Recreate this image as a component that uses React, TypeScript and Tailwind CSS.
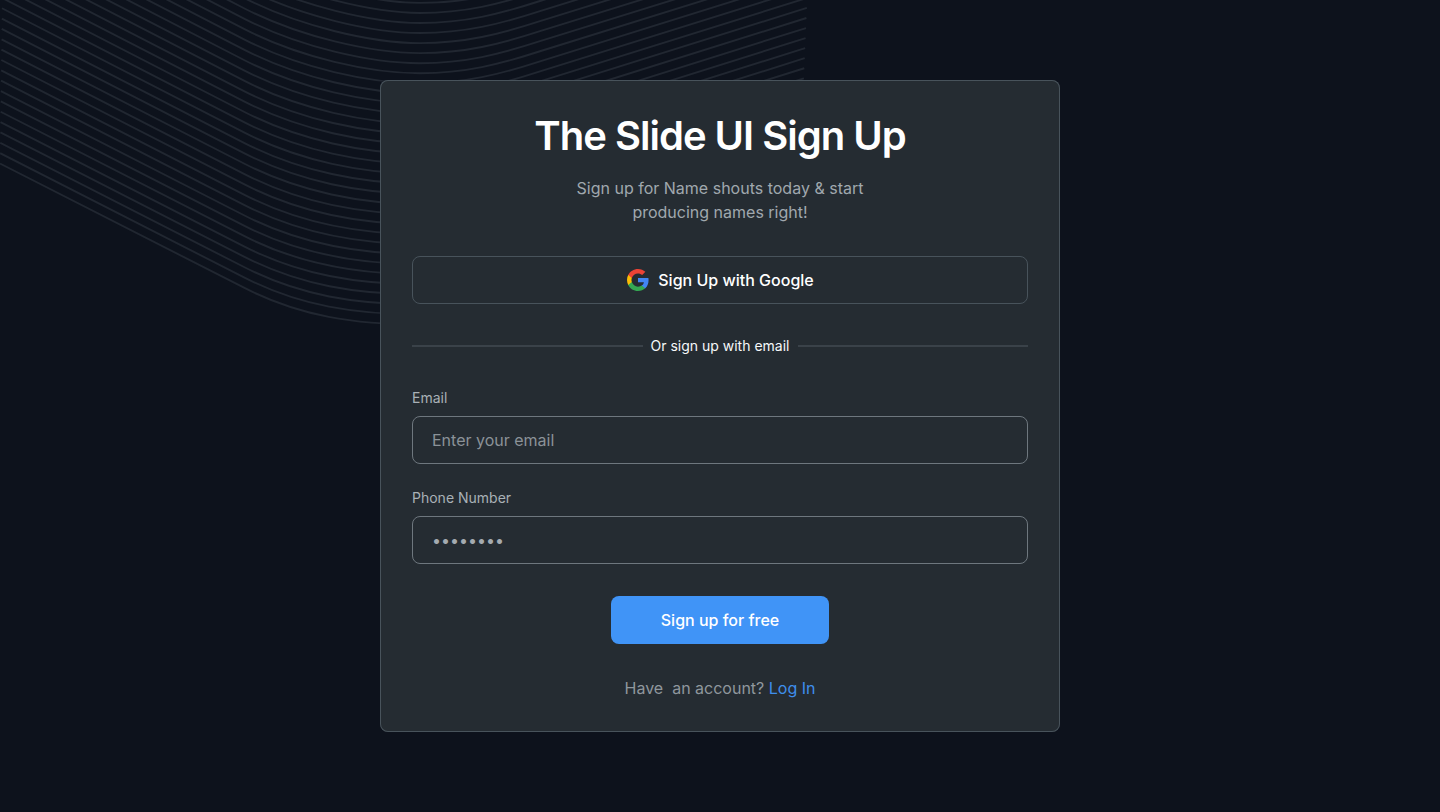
const LINE_COUNT = 46;

function wavePath(i: number) {
  const base = 324.5 - 10.05 * i;
  const leftX = 0.13 * i;
  const leftY = 163.5 - 10.35 * i;
  const rightX = 798 + 0.42 * i;
  const rightY = base - 105.5;
  const bendY = leftY + 124.7;
  return [
    `M${leftX} ${leftY}`,
    `L245 ${bendY}`,
    `C300 ${bendY + 28} ${355 + 0.6 * i} ${base} 420 ${base}`,
    `C465 ${base} 500 ${base - 9} 540 ${base - 22}`,
    `L${rightX} ${rightY}`,
  ].join(" ");
}

function WaveLines() {
  return (
    <svg
      aria-hidden="true"
      className="pointer-events-none absolute left-0 top-0"
      width="820"
      height="330"
      viewBox="0 0 820 330"
      fill="none"
    >
      {Array.from({ length: LINE_COUNT }, (_, i) => (
        <path key={i} d={wavePath(i)} stroke="#212731" strokeWidth="1.9" />
      ))}
    </svg>
  );
}

function GoogleIcon() {
  return (
    <svg aria-hidden="true" className="size-6" viewBox="0 0 24 24">
      <path
        fill="#4285F4"
        d="M22.56 12.25c0-.78-.07-1.53-.2-2.25H12v4.26h5.92c-.26 1.37-1.04 2.53-2.21 3.31v2.77h3.57c2.08-1.92 3.28-4.74 3.28-8.09z"
      />
      <path
        fill="#34A853"
        d="M12 23c2.97 0 5.46-.98 7.28-2.66l-3.57-2.77c-.98.66-2.23 1.06-3.71 1.06-2.86 0-5.29-1.93-6.16-4.53H2.18v2.84C3.99 20.53 7.7 23 12 23z"
      />
      <path
        fill="#FBBC05"
        d="M5.84 14.09c-.22-.66-.35-1.36-.35-2.09s.13-1.43.35-2.09V7.07H2.18C1.43 8.55 1 10.22 1 12s.43 3.45 1.18 4.93l3.66-2.84z"
      />
      <path
        fill="#EB4335"
        d="M12 5.38c1.62 0 3.06.56 4.21 1.64l3.15-3.15C17.45 2.09 14.97 1 12 1 7.7 1 3.99 3.47 2.18 7.07l3.66 2.84c.87-2.6 3.3-4.53 6.16-4.53z"
      />
    </svg>
  );
}

const inputClass =
  "h-12 w-full rounded-lg border border-[#6e777e] bg-transparent px-[19px] text-base text-white outline-none placeholder:opacity-100 focus:border-[#4094f7]";

export default function App() {
  return (
    <main className="relative flex min-h-screen items-center justify-center bg-[#0d121c] px-4 py-10 font-['Inter',sans-serif]">
      <WaveLines />
      <section className="relative flex w-full max-w-[680px] flex-col items-center rounded-lg bg-[#252c32] p-8 ring-1 ring-inset ring-[#48535b]">
        <h1 className="text-center text-[40px] leading-[48px] font-semibold tracking-tight text-white">
          The Slide UI Sign Up
        </h1>
        <p className="mt-4 max-w-[320px] text-center text-base text-[#a0a8ae]">
          Sign up for Name shouts today &amp; start producing names right!
        </p>
        <button
          type="button"
          className="mt-8 flex h-12 w-full items-center justify-center gap-2 rounded-lg border border-[#48535b] text-base font-medium text-white"
        >
          <GoogleIcon />
          Sign Up with Google
        </button>
        <div className="mt-8 flex w-full items-center gap-2 text-sm text-[#f6f8f9]">
          <span className="h-0.5 flex-1 bg-[#3a4249]" />
          Or sign up with email
          <span className="h-0.5 flex-1 bg-[#3a4249]" />
        </div>
        <form className="mt-8 flex w-full flex-col items-center" onSubmit={(e) => e.preventDefault()}>
          <div className="flex w-full flex-col gap-2">
            <label htmlFor="email" className="text-sm text-[#a9b1b6]">
              Email
            </label>
            <input
              id="email"
              type="email"
              placeholder="Enter your email"
              className={`${inputClass} placeholder:text-[#8b9298]`}
            />
          </div>
          <div className="mt-6 flex w-full flex-col gap-2">
            <label htmlFor="phone" className="text-sm text-[#a9b1b6]">
              Phone Number
            </label>
            <input
              id="phone"
              type="tel"
              placeholder="••••••••"
              className={`${inputClass} placeholder:text-[#a4abb0]`}
            />
          </div>
          <button
            type="submit"
            className="mt-8 h-12 w-[218px] rounded-lg bg-[#4094f7] text-base font-medium text-white"
          >
            Sign up for free
          </button>
        </form>
        <p className="mt-8 text-base whitespace-pre text-[#8f979d]">
          {"Have  an account? "}
          <a href="#login" className="text-[#3f8fec]">
            Log In
          </a>
        </p>
      </section>
    </main>
  );
}
